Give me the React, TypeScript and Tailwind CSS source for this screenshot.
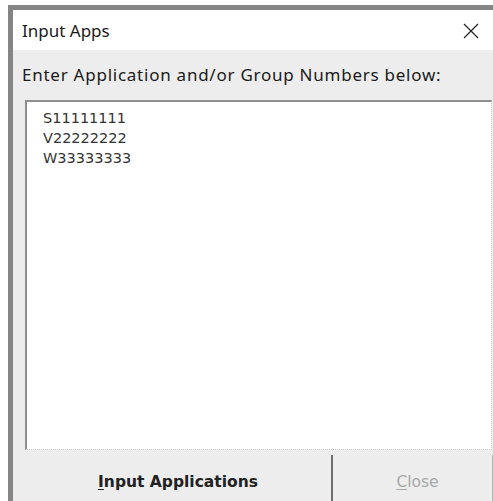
export default function App() {
  const entries = ["S11111111", "V22222222", "W33333333"];

  return (
    <div className="w-[493px] h-[501px] bg-white pt-[5px] pl-[8px] overflow-hidden">
      <div className="h-full border-t-[5px] border-l-[5px] border-[#858585] flex flex-col bg-[#ededed]">
        {/* title bar */}
        <div className="h-[40px] shrink-0 bg-white flex items-center justify-between pl-[9px] pr-[14px] font-['Noto_Sans',sans-serif] text-[17px] text-[#1a1a1a]">
          <span className="pt-[2px]">Input Apps</span>
          <svg width="16" height="16" viewBox="0 0 16 16" className="mt-[2px]">
            <path d="M1 1 L15 15 M15 1 L1 15" stroke="#222" strokeWidth="1.2" />
          </svg>
        </div>

        {/* prompt */}
        <div className="h-[50px] shrink-0 flex items-center pl-[9px] font-['Noto_Sans',sans-serif] text-[17px] tracking-[0.75px] text-[#1a1a1a]">
          Enter Application and/or Group Numbers below:
        </div>

        {/* entry list */}
        <div className="flex-1 ml-[12px] mr-[1px] bg-white border-t-2 border-l-2 border-t-[#8e8e8e] border-l-[#8e8e8e] border-r border-b border-r-[#c4c4c4] border-b-[#c4c4c4] [border-right-style:dotted] [border-bottom-style:dotted] pt-[6px] pl-[16px] font-['DejaVu_Sans',sans-serif] text-[14.5px] leading-[20px] text-[#333]">
          {entries.map((e) => (
            <div key={e}>{e}</div>
          ))}
        </div>

        {/* buttons */}
        <div className="h-[51px] shrink-0 flex pl-[12px] font-['DejaVu_Sans',sans-serif] text-[15.5px]">
          <button className="w-[306px] flex items-center justify-center pt-[14px] font-bold text-[#222]">
            <span>
              <span className="underline underline-offset-2">I</span>nput Applications
            </span>
          </button>
          <div className="w-[2px] mt-[5px] bg-[#6e6e6e]" />
          <button className="flex-1 flex items-center justify-center pt-[9px] pl-[10px] text-[#a8a8a8] border-r border-[#b0b0b0] mt-[5px]">
            <span>
              <span className="underline underline-offset-2">C</span>lose
            </span>
          </button>
        </div>
      </div>
    </div>
  );
}
